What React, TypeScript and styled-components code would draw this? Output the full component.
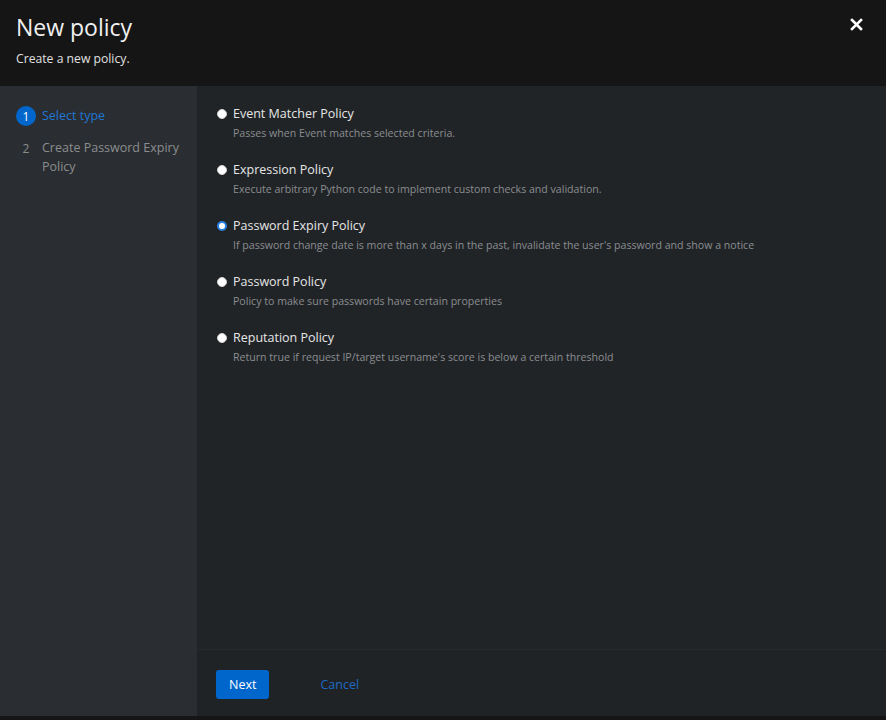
import React, { useState } from 'react';
import styled, { createGlobalStyle } from 'styled-components';

const GlobalStyle = createGlobalStyle`
  html, body {
    margin: 0;
    padding: 0;
    background: #151515;
  }
  body {
    font-family: "Open Sans", "Noto Sans", sans-serif;
    -webkit-font-smoothing: antialiased;
  }
`;

const policies = [
  { name: 'Event Matcher Policy', description: 'Passes when Event matches selected criteria.' },
  { name: 'Expression Policy', description: 'Execute arbitrary Python code to implement custom checks and validation.' },
  {
    name: 'Password Expiry Policy',
    description: "If password change date is more than x days in the past, invalidate the user's password and show a notice",
  },
  { name: 'Password Policy', description: 'Policy to make sure passwords have certain properties' },
  { name: 'Reputation Policy', description: "Return true if request IP/target username's score is below a certain threshold" },
];

const Modal = styled.div`
  width: 886px;
  height: 720px;
  display: flex;
  flex-direction: column;
  background: #151515;
`;

const Header = styled.header`
  position: relative;
  height: 86px;
  box-sizing: border-box;
  padding: 11px 16px 0;
  background: #151515;
`;

const Title = styled.h1`
  margin: 0;
  font-size: 23px;
  font-weight: 400;
  line-height: 32px;
  color: #f0f0f0;
`;

const Subtitle = styled.p`
  margin: 8px 0 0;
  font-size: 12.2px;
  line-height: 16px;
  color: #e0e0e0;
`;

const CloseButton = styled.button`
  position: absolute;
  top: 16px;
  right: 22px;
  width: 16px;
  height: 16px;
  padding: 0;
  border: none;
  background: none;
  cursor: pointer;
  display: flex;
  align-items: center;
  justify-content: center;
`;

const Body = styled.div`
  flex: 1;
  display: flex;
  min-height: 0;
`;

const Nav = styled.nav`
  width: 197px;
  flex-shrink: 0;
  background: #2a2d31;
  padding: 20px 16px;
  box-sizing: border-box;
`;

const StepList = styled.ol`
  list-style: none;
  margin: 0;
  padding: 0;
  display: flex;
  flex-direction: column;
  gap: 12px;
`;

const Step = styled.li`
  display: flex;
  align-items: flex-start;
  gap: 6px;
`;

const StepNumber = styled.span<{ $active: boolean }>`
  width: 20px;
  height: 20px;
  flex-shrink: 0;
  border-radius: 50%;
  display: flex;
  align-items: center;
  justify-content: center;
  font-size: 12px;
  color: ${p => (p.$active ? '#ffffff' : '#8a8d90')};
  background: ${p => (p.$active ? '#0066cc' : 'transparent')};
`;

const StepLabel = styled.span<{ $active: boolean }>`
  font-size: 12.5px;
  line-height: 19px;
  color: ${p => (p.$active ? '#1f76d2' : '#8a8d90')};
`;

const Main = styled.main`
  flex: 1;
  display: flex;
  flex-direction: column;
  background: #212427;
`;

const Content = styled.div`
  flex: 1;
  padding: 19px 20px 0;
  display: flex;
  flex-direction: column;
  gap: 21px;
`;

const Option = styled.label`
  display: grid;
  grid-template-columns: 10px 1fr;
  column-gap: 6px;
  row-gap: 3px;
  cursor: pointer;
`;

const Radio = styled.input`
  appearance: none;
  width: 10px;
  height: 10px;
  margin: 4px 0 0;
  border-radius: 50%;
  background: #ffffff;
  box-sizing: border-box;
  border: 1px solid #d2d2d2;

  &:checked {
    border: 2px solid #2b7fe0;
    background: #ffffff;
  }
`;

const OptionName = styled.span`
  font-size: 12.5px;
  line-height: 18px;
  color: #e6e6e6;
`;

const OptionDescription = styled.span`
  grid-column: 2;
  font-size: 10.6px;
  line-height: 14px;
  color: #8a8d90;
`;

const Footer = styled.footer`
  height: 67px;
  box-sizing: border-box;
  border-top: 1px solid #262a2e;
  background: #202326;
  padding: 20px 19px 0;
  display: flex;
  align-items: flex-start;
  gap: 24px;
`;

const PrimaryButton = styled.button`
  height: 29px;
  padding: 0 13px;
  border: none;
  border-radius: 3px;
  background: #0066cc;
  color: #ffffff;
  font-family: inherit;
  font-size: 12.5px;
  cursor: pointer;
`;

const LinkButton = styled.button`
  height: 29px;
  padding: 0 27px;
  border: none;
  background: none;
  color: #1c6ac4;
  font-family: inherit;
  font-size: 12.5px;
  cursor: pointer;
`;

const BottomEdge = styled.div`
  height: 4px;
  background: #151515;
`;

export default function App() {
  const [selected, setSelected] = useState(2);

  return (
    <>
      <GlobalStyle />
      <Modal>
        <Header>
          <Title>New policy</Title>
          <Subtitle>Create a new policy.</Subtitle>
          <CloseButton aria-label="Close">
            <svg width="13" height="13" viewBox="0 0 13 13">
              <path d="M2 2 L11 11 M11 2 L2 11" stroke="#ffffff" strokeWidth="2.6" strokeLinecap="square" />
            </svg>
          </CloseButton>
        </Header>
        <Body>
          <Nav>
            <StepList>
              <Step>
                <StepNumber $active>1</StepNumber>
                <StepLabel $active>Select type</StepLabel>
              </Step>
              <Step>
                <StepNumber $active={false}>2</StepNumber>
                <StepLabel $active={false}>Create Password Expiry Policy</StepLabel>
              </Step>
            </StepList>
          </Nav>
          <Main>
            <Content>
              {policies.map((p, i) => (
                <Option key={p.name}>
                  <Radio type="radio" name="policy" checked={selected === i} onChange={() => setSelected(i)} />
                  <OptionName>{p.name}</OptionName>
                  <OptionDescription>{p.description}</OptionDescription>
                </Option>
              ))}
            </Content>
            <Footer>
              <PrimaryButton>Next</PrimaryButton>
              <LinkButton>Cancel</LinkButton>
            </Footer>
          </Main>
        </Body>
        <BottomEdge />
      </Modal>
    </>
  );
}
